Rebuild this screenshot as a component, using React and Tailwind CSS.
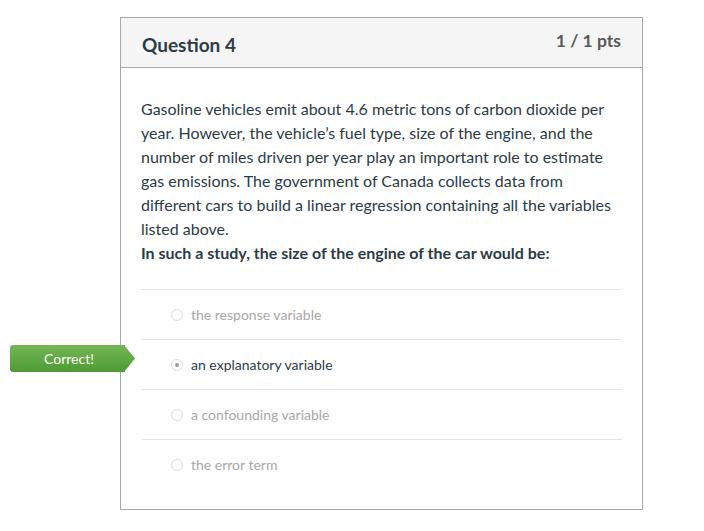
export default function App() {
  const answers = [
    { text: "the response variable", selected: false },
    { text: "an explanatory variable", selected: true },
    { text: "a confounding variable", selected: false },
    { text: "the error term", selected: false },
  ];
  return (
    <div className="min-h-[531px] bg-white pt-[17px] pl-[120px]" style={{ fontFamily: "Lato, 'Open Sans', sans-serif" }}>
      <div className="relative w-[523px] h-[493px] border border-[#a8a8a8] bg-white">
        <div className="h-[50px] bg-[#f5f5f5] border-b border-[#a8a8a8] flex justify-between px-[21px]">
          <div className="pt-[15px] text-[19px] font-bold text-[#2d3b45] leading-[24px]">Question 4</div>
          <div className="pt-[12px] text-[17.5px] font-bold text-[#555a5e] leading-[22px]">1 / 1 pts</div>
        </div>
        <div className="px-[20px] pt-[29px]">
          <div className="text-[16px] leading-[24px] text-[#2d3b45]">
            <p>
              Gasoline vehicles emit about 4.6 metric tons of carbon dioxide per year. However, the vehicle’s fuel type, size of the engine, and the number of miles driven per year play an important role to estimate gas emissions. The government of Canada collects data from different cars to build a linear regression containing all the variables listed above.
            </p>
            <p className="font-bold">In such a study, the size of the engine of the car would be:</p>
          </div>
          <div className="mt-[24px]">
            {answers.map((a) => (
              <div key={a.text} className="relative h-[50px] border-t border-[#e5e5e5] flex items-center pl-[30px]">
                {a.selected && (
                  <div className="absolute left-[-131px] top-[5px] flex items-center">
                    <div className="w-[115px] h-[27px] rounded-l-[3px] bg-gradient-to-b from-[#73b755] to-[#4e9a34] text-white text-[14px] flex items-center justify-center leading-none pl-[3px]">
                      Correct!
                    </div>
                    <svg width="11" height="27" viewBox="0 0 11 27" className="-ml-px">
                      <defs>
                        <linearGradient id="g" x1="0" y1="0" x2="0" y2="1">
                          <stop offset="0" stopColor="#73b755" />
                          <stop offset="1" stopColor="#4e9a34" />
                        </linearGradient>
                      </defs>
                      <polygon points="0,0 11,13.5 0,27" fill="url(#g)" />
                    </svg>
                  </div>
                )}
                <span className="relative w-[12px] h-[12px] rounded-full border border-[#dcdcdc] bg-white flex items-center justify-center">
                  {a.selected && <span className="w-[4px] h-[4px] rounded-full bg-[#9a9a9a]" />}
                </span>
                <span className={`ml-[8px] text-[14px] ${a.selected ? "text-[#2d3b45]" : "text-[#a8a8a8]"}`}>{a.text}</span>
              </div>
            ))}
          </div>
        </div>
      </div>
    </div>
  );
}
